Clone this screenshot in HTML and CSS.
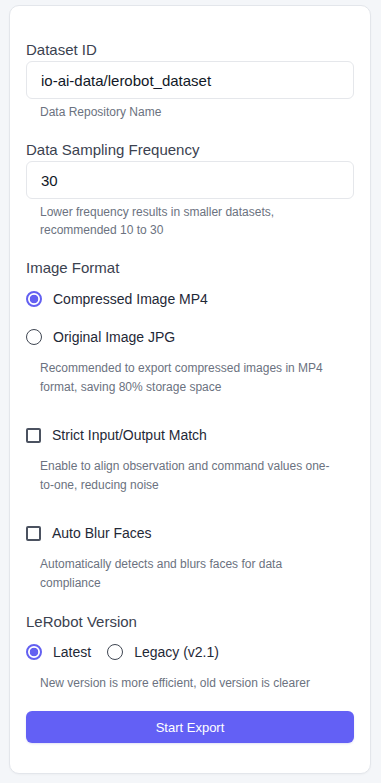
FILE: index.html
```html
<!DOCTYPE html>
<html>
<head lang="en">
    <meta charset="UTF-8">
    <title>Export Dataset</title>
    <link rel="stylesheet" href="styles.css">
</head>
<body>
<div class="panel">
    <form class="export_form">
        <div class="field">
            <label class="field_label" for="dataset_id">Dataset ID</label>
            <input class="text_input" id="dataset_id" type="text" value="io-ai-data/lerobot_dataset"/>
            <p class="hint">Data Repository Name</p>
        </div>

        <div class="field">
            <label class="field_label" for="freq">Data Sampling Frequency</label>
            <input class="text_input" id="freq" type="text" value="30"/>
            <p class="hint">Lower frequency results in smaller datasets, recommended 10 to 30</p>
        </div>

        <div class="field">
            <div class="field_label">Image Format</div>
            <label class="option"><input type="radio" name="fmt" checked/><span>Compressed Image MP4</span></label>
            <label class="option"><input type="radio" name="fmt"/><span>Original Image JPG</span></label>
            <p class="hint hint_opt">Recommended to export compressed images in MP4 format, saving 80% storage space</p>
        </div>

        <div class="field">
            <label class="option"><input type="checkbox"/><span>Strict Input/Output Match</span></label>
            <p class="hint hint_opt">Enable to align observation and command values one-to-one, reducing noise</p>
        </div>

        <div class="field">
            <label class="option"><input type="checkbox"/><span>Auto Blur Faces</span></label>
            <p class="hint hint_opt">Automatically detects and blurs faces for data compliance</p>
        </div>

        <div class="field">
            <div class="field_label">LeRobot Version</div>
            <div class="inline_opts">
                <label class="option"><input type="radio" name="ver" checked/><span>Latest</span></label>
                <label class="option"><input type="radio" name="ver"/><span>Legacy (v2.1)</span></label>
            </div>
            <p class="hint hint_opt">New version is more efficient, old version is clearer</p>
        </div>

        <button type="button" class="btn_export">Start Export</button>
    </form>
</div>
</body>
</html>
```

FILE: styles.css
```css
*{margin:0;padding:0;box-sizing:border-box;}
html,body{background:#f4f6f9;}
body{padding:5px 10px 9px 9px;font-family:"Liberation Sans",Arial,Helvetica,sans-serif;color:#1f2937;}

.panel{background:#fff;border:1px solid #e3e6eb;border-radius:10px;padding:33px 16px 30px;box-shadow:0 1px 2px rgba(0,0,0,0.03);}
.export_form{display:flex;flex-direction:column;}

.field{display:flex;flex-direction:column;margin-bottom:18px;}
.field_label{display:block;font-size:15px;line-height:22px;color:#3b4250;}

.text_input{display:block;width:100%;height:38px;padding:0 14px;border:1px solid #e5e7eb;border-radius:6px;font-family:inherit;font-size:15px;color:#111827;background:#fff;outline:none;}

.hint{padding:0 14px;margin-top:4px;font-size:12px;line-height:18px;color:#6b7280;}
.hint_opt{margin-top:3px;line-height:19px;}

.option{display:flex;align-items:center;gap:11px;height:22px;margin:9px 0 8px;font-size:14px;color:#1f2937;cursor:pointer;}
.option + .option{margin-top:8px;}

.option input{appearance:none;-webkit-appearance:none;flex:none;margin:0;background:#fff;}
.option input[type=radio]{width:16px;height:16px;border:1.5px solid #3f4652;border-radius:50%;}
.option input[type=radio]:checked{border:2px solid #6360f1;background:radial-gradient(circle,#6360f1 0,#6360f1 4px,#fff 4.6px);}
.option input[type=checkbox]{width:15px;height:15px;border:2px solid #4b5260;border-radius:2px;}

.inline_opts{display:flex;gap:16px;}
.inline_opts .option{margin:8px 0;}

.btn_export{height:32px;border:none;border-radius:6px;background:#6360f5;color:#fff;font-family:inherit;font-size:13px;cursor:pointer;box-shadow:0 1px 2px rgba(60,60,200,0.15);}
```
